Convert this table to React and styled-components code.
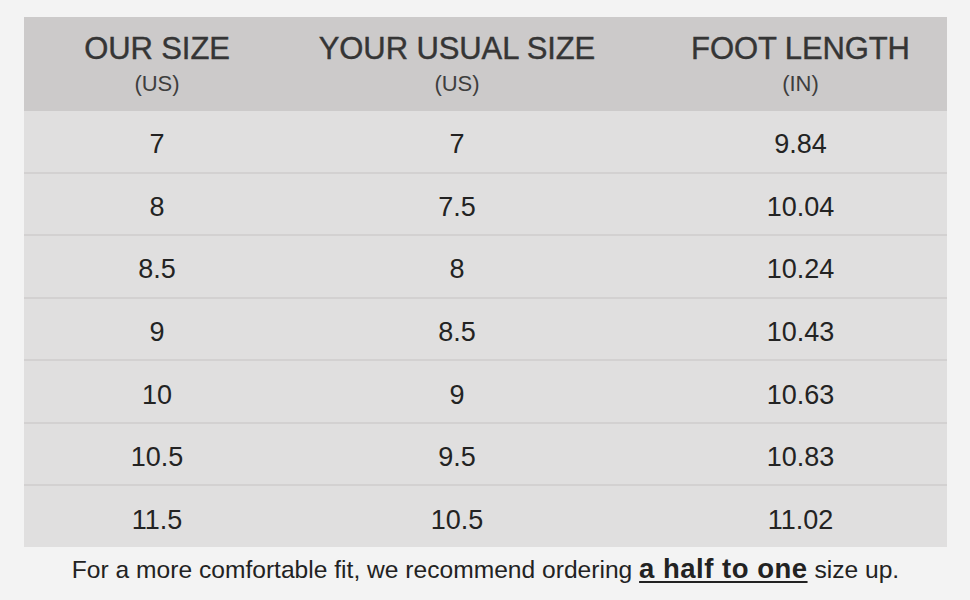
import React from 'react';
import styled, { createGlobalStyle } from 'styled-components';

const GlobalStyle = createGlobalStyle`
  html, body {
    margin: 0;
    padding: 0;
    background: #f3f3f3;
  }
  body {
    font-family: "Liberation Sans", Arial, sans-serif;
  }
`;

const Page = styled.div`
  width: 970px;
  height: 600px;
  box-sizing: border-box;
  padding: 17px 23px 0 24px;
  display: flex;
  flex-direction: column;
`;

const Table = styled.div`
  height: 530px;
  display: flex;
  flex-direction: column;
  background: #e0dfdf;
`;

const Columns = styled.div`
  display: grid;
  grid-template-columns: 266px 334px 1fr;
`;

const HeaderRow = styled(Columns)`
  height: 94px;
  background: #cccaca;
  color: #353535;
`;

const HeadCell = styled.div`
  display: flex;
  flex-direction: column;
  align-items: center;
  padding-top: 14px;
  padding-left: ${({ shift }) => shift || 0}px;
`;

const HeadTitle = styled.div`
  font-size: 31px;
  line-height: 36px;
  letter-spacing: -0.1px;
  -webkit-text-stroke: 0.4px #353535;
`;

const HeadUnit = styled.div`
  margin-top: 4px;
  font-size: 22px;
  line-height: 26px;
  color: #3e3e3e;
`;

const Row = styled(Columns)`
  flex: 1;
  align-items: center;
  border-top: ${({ first }) => (first ? 'none' : '2px solid #d3d1d1')};
`;

const Cell = styled.div`
  text-align: center;
  font-size: 27px;
  color: #232323;
  padding-top: 7px;
  padding-left: ${({ shift }) => shift || 0}px;
`;

const Note = styled.p`
  margin: 0;
  padding-top: 6px;
  text-align: center;
  font-size: 24.6px;
  color: #222;
`;

const Strong = styled.span`
  font-weight: bold;
  font-size: 27.5px;
  letter-spacing: 0.5px;
  text-decoration: underline;
  text-underline-offset: 3px;
  text-decoration-thickness: 2px;
`;

const rows = [
  ['7', '7', '9.84'],
  ['8', '7.5', '10.04'],
  ['8.5', '8', '10.24'],
  ['9', '8.5', '10.43'],
  ['10', '9', '10.63'],
  ['10.5', '9.5', '10.83'],
  ['11.5', '10.5', '11.02'],
];

const App = () => (
  <>
    <GlobalStyle />
    <Page>
      <Table>
        <HeaderRow>
          <HeadCell>
            <HeadTitle>OUR SIZE</HeadTitle>
            <HeadUnit>(US)</HeadUnit>
          </HeadCell>
          <HeadCell>
            <HeadTitle>YOUR USUAL SIZE</HeadTitle>
            <HeadUnit>(US)</HeadUnit>
          </HeadCell>
          <HeadCell shift={30}>
            <HeadTitle>FOOT LENGTH</HeadTitle>
            <HeadUnit>(IN)</HeadUnit>
          </HeadCell>
        </HeaderRow>
        {rows.map(([ours, usual, foot], i) => (
          <Row key={ours} first={i === 0}>
            <Cell>{ours}</Cell>
            <Cell>{usual}</Cell>
            <Cell shift={30}>{foot}</Cell>
          </Row>
        ))}
      </Table>
      <Note>
        For a more comfortable fit, we recommend ordering <Strong>a half to one</Strong> size up.
      </Note>
    </Page>
  </>
);

export default App;
